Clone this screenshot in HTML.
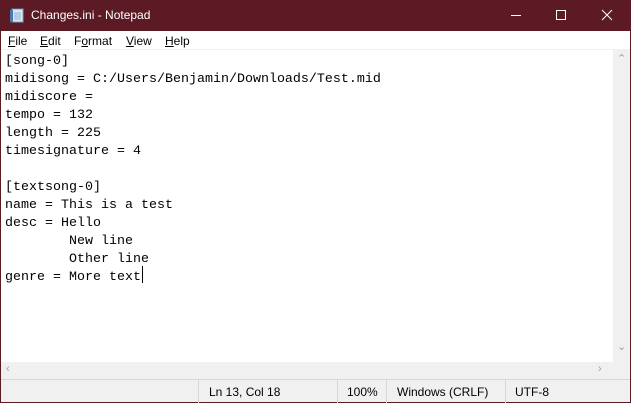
<!DOCTYPE html>
<html><head><meta charset="utf-8"><style>
*{margin:0;padding:0;box-sizing:border-box}
body{width:631px;height:403px;overflow:hidden;background:#5c1a24;font-family:"Liberation Sans",sans-serif;position:relative}
.title{position:absolute;left:0;top:0;width:631px;height:31px;background:#5c1a24;color:#fff;font-size:12px}
.title .t{position:absolute;left:31px;top:8px}
.menu{position:absolute;left:1px;top:31px;width:629px;height:19px;background:#fff;font-size:12px;color:#000;border-bottom:1px solid #f0f0f0}
.menu span{position:absolute;top:3px}
.edit{position:absolute;left:1px;top:50px;width:612px;height:312px;background:#fff;font-family:"Liberation Mono",monospace;font-size:13.33px;line-height:18px;color:#000;padding:3px 0 0 4px;white-space:pre}
.vs{position:absolute;left:613px;top:50px;width:17px;height:312px;background:#f0f0f0}
.hs{position:absolute;left:1px;top:362px;width:629px;height:17px;background:#f0f0f0}
.st{position:absolute;left:1px;top:379px;width:629px;height:23px;background:#f0f0f0;border-top:1px solid #d7d7d7;font-size:12px;color:#000}
.st span{position:absolute;top:5px}
.sep{position:absolute;top:0;width:1px;height:23px;background:#d7d7d7}
.ar{position:absolute;color:#a0a0a0;font-size:11px}
</style></head><body>
<div class="title">
<svg style="position:absolute;left:9px;top:7px" width="16" height="16" viewBox="0 0 16 16"><rect x="3" y="2" width="11" height="13" fill="#dbe9f5" stroke="#7aa0c4"/><path d="M4 2v-1M6 2v-1M8 2v-1M10 2v-1M12 2v-1" stroke="#445"/><path d="M5 6h7M5 8h7M5 10h7M5 12h7" stroke="#8fb0d0"/><rect x="1" y="3" width="3" height="12" fill="#4a7bb0"/></svg>
<span class="t">Changes.ini - Notepad</span>
<svg style="position:absolute;left:510px;top:9px" width="12" height="12"><path d="M1 6.5h10" stroke="#fff"/></svg>
<svg style="position:absolute;left:555px;top:9px" width="12" height="12"><rect x="1.5" y="1.5" width="9" height="9" fill="none" stroke="#fff"/></svg>
<svg style="position:absolute;left:601px;top:9px" width="12" height="12"><path d="M1 1l10 10M11 1L1 11" stroke="#fff"/></svg>
</div>
<div class="menu">
<span style="left:7px"><u>F</u>ile</span>
<span style="left:39px"><u>E</u>dit</span>
<span style="left:73px">F<u>o</u>rmat</span>
<span style="left:125px"><u>V</u>iew</span>
<span style="left:164px"><u>H</u>elp</span>
</div>
<div class="edit">[song-0]
midisong = C:/Users/Benjamin/Downloads/Test.mid
midiscore =
tempo = 132
length = 225
timesignature = 4

[textsong-0]
name = This is a test
desc = Hello
        New line
        Other line
genre = More text</div>
<div style="position:absolute;left:142px;top:266px;width:1px;height:17px;background:#000"></div>
<div class="vs"><span class="ar" style="left:4px;top:2px">&#8963;</span><span class="ar" style="left:4px;top:290px">&#8964;</span></div>
<div class="hs"><span class="ar" style="left:5px;top:1px">&lsaquo;</span><span class="ar" style="left:597px;top:1px">&rsaquo;</span></div>
<div class="st">
<div class="sep" style="left:197px"></div>
<div class="sep" style="left:336px"></div>
<div class="sep" style="left:385px"></div>
<div class="sep" style="left:504px"></div>
<span style="left:208px">Ln 13, Col 18</span>
<span style="left:346px">100%</span>
<span style="left:396px">Windows (CRLF)</span>
<span style="left:514px">UTF-8</span>
</div>
</body></html>
